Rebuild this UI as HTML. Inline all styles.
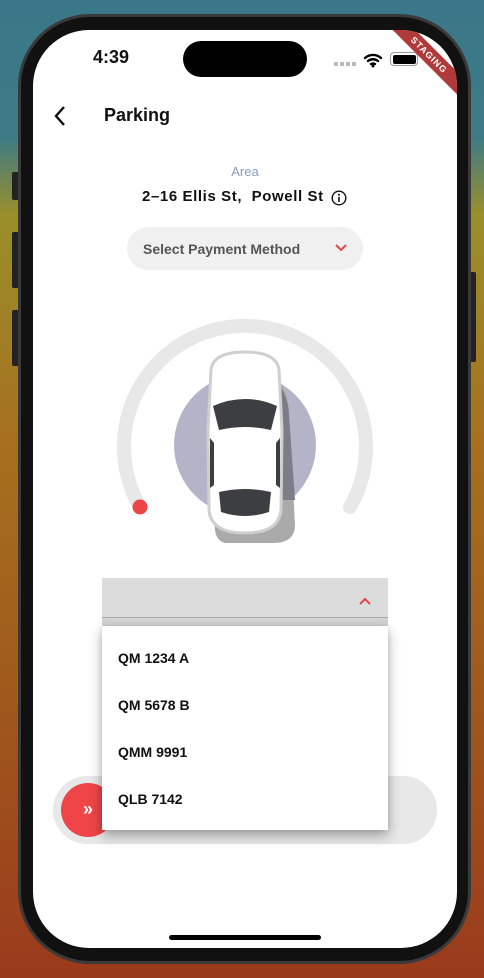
<!DOCTYPE html>
<html><head><meta charset="utf-8"><style>
*{margin:0;padding:0;box-sizing:border-box}
body{width:484px;height:978px;overflow:hidden;position:relative;font-family:"Liberation Sans",sans-serif;
background:linear-gradient(180deg,#3a7889 0%,#3d7a86 14%,#9a8f2a 22%,#a6701f 45%,#a05a1c 70%,#9a3a1c 100%)}
.phone{position:absolute;left:18px;top:14px;width:453px;height:950px;border-radius:72px;background:#111;border:3px solid #3a3a3a}
.screen{position:absolute;left:33px;top:30px;width:424px;height:918px;border-radius:56px;background:#fff;overflow:hidden}
.abs{position:absolute}
</style></head><body>
<div class="abs" style="left:12px;top:172px;width:8px;height:28px;background:#222;border-radius:2px"></div>
<div class="abs" style="left:12px;top:232px;width:8px;height:56px;background:#222;border-radius:2px"></div>
<div class="abs" style="left:12px;top:310px;width:8px;height:56px;background:#222;border-radius:2px"></div>
<div class="abs" style="left:468px;top:272px;width:8px;height:90px;background:#222;border-radius:2px"></div>
<div class="phone"></div>
<div class="screen">
  <div class="abs" style="left:60px;top:17px;font-size:18px;font-weight:bold;color:#111">4:39</div>
  <div class="abs" style="left:150px;top:11px;width:124px;height:36px;border-radius:18px;background:#000"></div>
  <div class="abs" style="left:301px;top:32px;width:22px;height:4px;background:repeating-linear-gradient(90deg,#bbb 0 4px,transparent 4px 6px)"></div>
  <svg class="abs" style="left:330px;top:22px" width="20" height="16" viewBox="0 0 20 16"><path d="M2 6a12 12 0 0 1 16 0M5 9a8 8 0 0 1 10 0M8 12a4 4 0 0 1 4 0" stroke="#000" stroke-width="2.4" fill="none" stroke-linecap="round"/><circle cx="10" cy="14" r="1.5"/></svg>
  <div class="abs" style="left:357px;top:22px;width:28px;height:14px;border:1.5px solid #999;border-radius:4px;padding:1.5px"><div style="width:100%;height:100%;background:#000;border-radius:2px"></div></div>
  <div class="abs" style="left:346px;top:17px;width:100px;height:16px;background:#b03a3a;transform:rotate(45deg);transform-origin:50% 50%;color:#fff;font-size:9px;font-weight:bold;text-align:center;line-height:16px;letter-spacing:1px">STAGING</div>
  <svg class="abs" style="left:20px;top:75px" width="14" height="22" viewBox="0 0 14 22"><path d="M11 2L3 11l8 9" stroke="#111" stroke-width="2.4" fill="none"/></svg>
  <div class="abs" style="left:71px;top:75px;font-size:18px;font-weight:bold;color:#111">Parking</div>
  <div class="abs" style="left:0;width:424px;top:134px;text-align:center;font-size:13px;color:#8a9ac0">Area</div>
  <div class="abs" style="left:109px;top:158px;font-size:15px;font-weight:bold;color:#111;letter-spacing:0.6px">2–16 Ellis St,&nbsp; Powell St</div>
  <svg class="abs" style="left:298px;top:160px" width="16" height="16"><circle cx="8" cy="8" r="6.8" stroke="#111" stroke-width="1.4" fill="none"/><path d="M8 7v5" stroke="#111" stroke-width="1.6"/><circle cx="8" cy="4.7" r="1"/></svg>
  <div class="abs" style="left:94px;top:197px;width:236px;height:43px;border-radius:22px;background:#f0f0f0"></div>
  <div class="abs" style="left:110px;top:211px;font-size:14px;font-weight:bold;color:#555">Select Payment Method</div>
  <svg class="abs" style="left:302px;top:213px" width="12" height="10"><path d="M1 2l5 5 5-5" stroke="#e84545" stroke-width="2" fill="none"/></svg>
  <svg class="abs" style="left:0;top:0" width="424" height="918">
    <path d="M107 477 A121 121 0 1 1 317 477" stroke="#e8e8e8" stroke-width="14" fill="none" stroke-linecap="round"/>
    <circle cx="107" cy="477" r="7.5" fill="#ef4444"/>
    <circle cx="212" cy="415" r="71" fill="#b4b4c8"/>
    <path d="M230 340 Q252 345 256 380 L262 495 Q262 513 240 513 L192 513 Q180 510 182 490 Z" fill="#aaa"/>
    <path d="M240 350 Q255 360 256 385 L262 470 L250 470 Z" fill="#7d7d8a"/>
    <path d="M178 340 Q180 322 212 322 Q244 322 246 340 L249 400 L248 480 Q246 503 212 503 Q178 503 176 480 L175 400 Z" fill="#fff" stroke="#cfcfcf" stroke-width="3"/>
    <path d="M180 376 Q212 362 244 376 L238 400 Q212 394 186 400 Z" fill="#3d3e42"/>
    <path d="M186 462 Q212 456 238 462 L236 482 Q212 490 188 482 Z" fill="#3d3e42"/>
    <path d="M177 408 L181 413 L181 455 L177 458 Z M247 408 L243 413 L243 455 L247 458 Z" fill="#3d3e42"/>
  </svg>
  <div class="abs" style="left:20px;top:746px;width:384px;height:68px;border-radius:34px;background:#e8e8e8"></div>
  <div class="abs" style="left:28px;top:753px;width:54px;height:54px;border-radius:27px;background:#ef4548;color:#fff;font-size:18px;font-weight:bold;text-align:center;line-height:52px">»</div>
  <div class="abs" style="left:69px;top:548px;width:286px;height:40px;background:#dcdcdc;border-bottom:1px solid #aaa"></div>
  <svg class="abs" style="left:326px;top:567px" width="12" height="8"><path d="M1 7l5-5 5 5" stroke="#e84545" stroke-width="2" fill="none"/></svg>
  <div class="abs" style="left:69px;top:588px;width:286px;height:8px;background:#d4d4d4"></div>
  <div class="abs" style="left:69px;top:596px;width:286px;height:204px;background:#fff;box-shadow:0 6px 12px rgba(0,0,0,.3),0 0 6px rgba(0,0,0,.12);font-size:14px;font-weight:bold;color:#111">
    <div class="abs" style="left:16px;top:24px">QM 1234 A</div>
    <div class="abs" style="left:16px;top:71px">QM 5678 B</div>
    <div class="abs" style="left:16px;top:118px">QMM 9991</div>
    <div class="abs" style="left:16px;top:165px">QLB 7142</div>
  </div>
  <div class="abs" style="left:136px;top:905px;width:152px;height:5px;border-radius:3px;background:#000"></div>
</div>
</body></html>
